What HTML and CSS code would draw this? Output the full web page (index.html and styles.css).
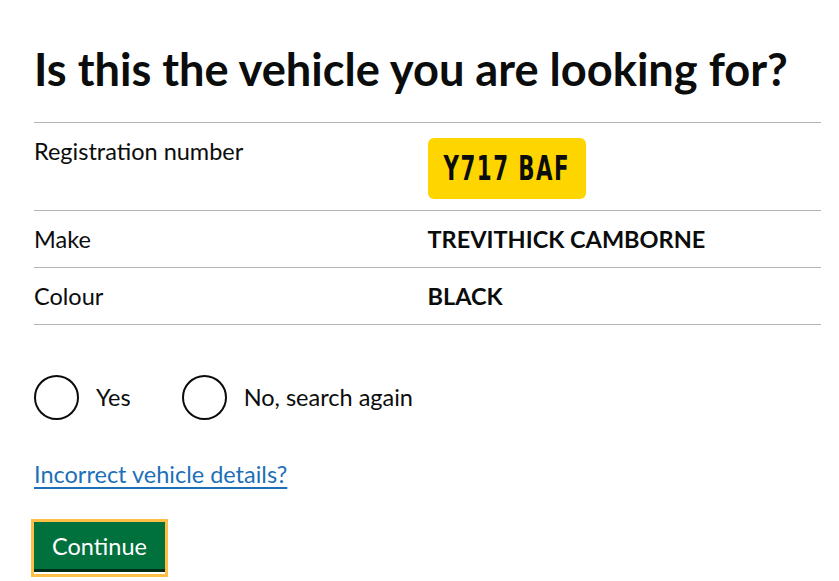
FILE: index.html
```html
<!DOCTYPE html>
<html lang="en">
<head>
    <meta charset="UTF-8">
    <meta name="viewport" content="width=device-width, initial-scale=1.0">
    <title>Is this the vehicle you are looking for?</title>
    <link rel="stylesheet" href="styles.css">
</head>
<body>
    <main class="page">
        <h1 class="heading">Is this the vehicle you are looking for?</h1>

        <dl class="summary-list">
            <div class="summary-row">
                <dt class="summary-key">Registration number</dt>
                <dd class="summary-value plate-cell">
                    <span class="plate"><span class="plate-text">Y717 BAF</span></span>
                </dd>
            </div>
            <div class="summary-row">
                <dt class="summary-key">Make</dt>
                <dd class="summary-value strong">TREVITHICK CAMBORNE</dd>
            </div>
            <div class="summary-row">
                <dt class="summary-key">Colour</dt>
                <dd class="summary-value strong">BLACK</dd>
            </div>
        </dl>

        <form class="confirm-form" onsubmit="return false;">
            <div class="radios">
                <label class="radio">
                    <input class="radio-input" type="radio" name="confirm" value="yes">
                    <span class="radio-label">Yes</span>
                </label>
                <label class="radio">
                    <input class="radio-input" type="radio" name="confirm" value="no">
                    <span class="radio-label">No, search again</span>
                </label>
            </div>

            <p class="link-row">
                <a class="link" href="#">Incorrect vehicle details?</a>
            </p>

            <div class="button-focus">
                <button class="button" type="submit">Continue</button>
            </div>
        </form>
    </main>
</body>
</html>
```

FILE: styles.css
```css
* {
    margin: 0;
    padding: 0;
    box-sizing: border-box;
}

body {
    font-family: Lato, "Noto Sans", Arial, sans-serif;
    color: #0b0c0c;
    background: #fff;
}

.page {
    width: 821px;
    padding: 44px 0 0 34px;
}

.heading {
    font-size: 45.2px;
    line-height: 50px;
    font-weight: 700;
    margin-bottom: 28px;
}

/* summary list */

.summary-list {
    border-top: 1px solid #b1b4b6;
}

.summary-row {
    display: flex;
    border-bottom: 1px solid #b1b4b6;
    font-size: 23.5px;
    line-height: 31px;
}

.summary-key,
.summary-value {
    width: 50%;
    padding: 13px 0 12px;
}

.summary-value.strong {
    font-weight: 700;
}

.plate-cell {
    padding-bottom: 11px;
}

.plate {
    display: flex;
    align-items: center;
    justify-content: center;
    width: 158px;
    height: 61px;
    margin-top: 2px;
    background: #ffd500;
    border-radius: 6px;
}

.plate-text {
    display: inline-block;
    font-family: "DejaVu Sans Condensed", "DejaVu Sans", sans-serif;
    font-weight: 700;
    font-size: 33px;
    line-height: 1;
    letter-spacing: 2px;
    transform: scaleX(0.72);
    white-space: nowrap;
}

/* radios */

.confirm-form {
    margin-top: 50px;
}

.radios {
    display: flex;
    gap: 51px;
}

.radio {
    display: flex;
    align-items: center;
    gap: 17px;
    font-size: 23.5px;
    line-height: 31px;
    cursor: pointer;
}

.radio-input {
    appearance: none;
    width: 45px;
    height: 45px;
    border: 2px solid #0b0c0c;
    border-radius: 50%;
    background: #fff;
    margin: 0;
}

.radio-input:checked {
    background: radial-gradient(circle, #0b0c0c 0 11px, #fff 12px);
}

/* link */

.link-row {
    margin-top: 39px;
    font-size: 23.5px;
    line-height: 31px;
}

.link {
    color: #1d70b8;
    text-decoration: underline;
    text-decoration-thickness: 2px;
    text-underline-offset: 4px;
}

/* button */

.button-focus {
    display: inline-block;
    margin: 29px 0 0 -3px;
    border: 3px solid #ffbf47;
    padding-bottom: 2px;
    background: #fff;
}

.button {
    display: block;
    width: 131px;
    height: 50px;
    padding: 0 0 1px;
    border: none;
    background: #00703c;
    box-shadow: inset 0 -3px 0 #002d18;
    color: #fff;
    font-family: inherit;
    font-size: 23.5px;
    line-height: 31px;
    cursor: pointer;
}
```
